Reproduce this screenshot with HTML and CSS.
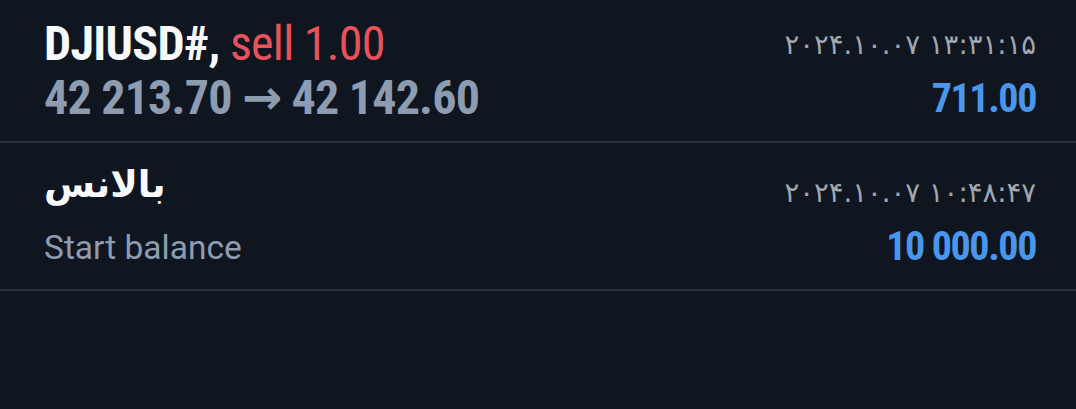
FILE: index.html
```html
<!DOCTYPE html>
<html lang="fa">
<head>
	<meta charset="utf-8" />
	<title>History</title>
	<link rel="stylesheet" href="styles.css">
</head>
<body>
<div class="deals">
	<!-- trade row -->
	<div class="deal">
		<div class="deal-left">
			<div class="title">DJIUSD#, <span class="sell">sell 1.00</span></div>
			<div class="prices">42 213.70 → 42 142.60</div>
		</div>
		<div class="deal-right">
			<div class="time">۲۰۲۴.۱۰.۰۷ ۱۳:۳۱:۱۵</div>
			<div class="profit">711.00</div>
		</div>
	</div>
	<!-- balance row -->
	<div class="deal deal-balance">
		<div class="deal-left">
			<div class="title-fa" dir="rtl">بالانس</div>
			<div class="comment">Start balance</div>
		</div>
		<div class="deal-right">
			<div class="time">۲۰۲۴.۱۰.۰۷ ۱۰:۴۸:۴۷</div>
			<div class="profit">10 000.00</div>
		</div>
	</div>
</div>
</body>
</html>
```

FILE: styles.css
```css
/* page */
body {
	margin: 0;
	background-color: #0f1620;
	font-family: "Roboto Condensed", Roboto, "DejaVu Sans", sans-serif;
	color: #ffffff;
}
/* one deal in the list */
.deal {
	display: flex;
	justify-content: space-between;
	height: 124px;
	padding: 17px 40px 0 44px;
	border-bottom: 2px solid #2a313b;
}
.deal-balance {
	padding-top: 22px;
}
.deal-left {
	display: flex;
	flex-direction: column;
	align-items: flex-start;
}
.deal-right {
	display: flex;
	flex-direction: column;
	align-items: flex-end;
}
/* symbol line */
.title {
	font-size: 48px;
	font-weight: bold;
	line-height: 54px;
	letter-spacing: -0.7px;
	color: #f7f9fb;
}
.title-fa {
	font-family: "DejaVu Sans", sans-serif;
	font-size: 37px;
	font-weight: bold;
	line-height: 40px;
	padding-bottom: 14px;
	color: #f7f9fb;
}
.sell {
	font-weight: normal;
	color: #e9525a;
}
.prices {
	font-size: 48px;
	font-weight: bold;
	line-height: 54px;
	letter-spacing: -0.8px;
	color: #8d9cb1;
}
.comment {
	font-family: Roboto, sans-serif;
	font-size: 33.5px;
	line-height: 54px;
	padding-top: 2px;
	color: #8d9cb1;
}
/* time and result */
.time {
	font-family: "DejaVu Sans", sans-serif;
	font-size: 27.5px;
	line-height: 54px;
	color: #a0a7b1;
}
.profit {
	font-size: 40px;
	font-weight: bold;
	line-height: 54px;
	letter-spacing: -1.4px;
	padding-top: 1px;
	color: #4a96ec;
}
```
